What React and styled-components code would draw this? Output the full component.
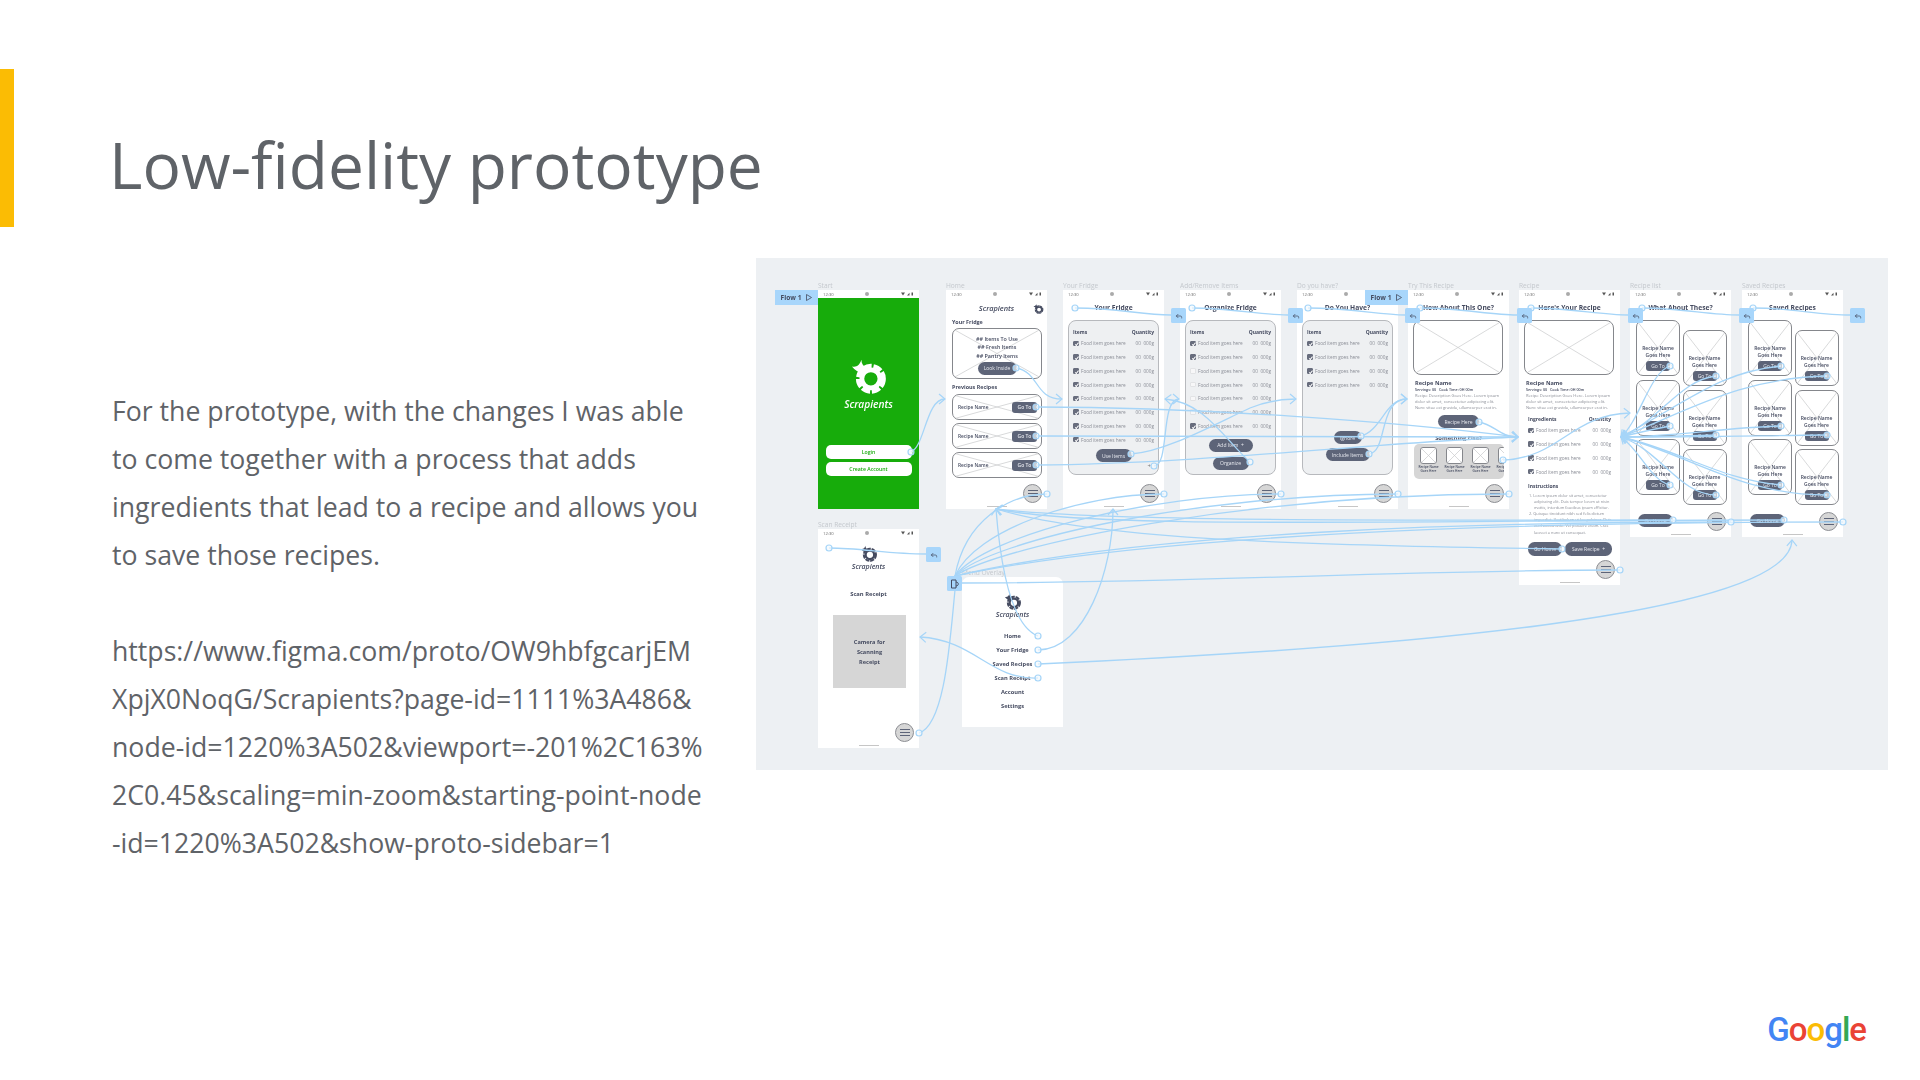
import React from "react";
import styled, { createGlobalStyle } from "styled-components";
import { Reply } from "lucide-react";

const GlobalStyle = createGlobalStyle`
  html, body { margin: 0; padding: 0; background: #fff; }
  body { font-family: "Open Sans", "Noto Sans", sans-serif; }
`;

const Slide = styled.main`
  width: 1920px;
  height: 1080px;
  display: flex;
  flex-direction: column;
  overflow: hidden;
`;
const Header = styled.header`
  flex: none;
  display: flex;
  align-items: center;
  gap: 95px;
  margin-top: 69px;
  height: 158px;
`;
const Accent = styled.div`
  width: 14px;
  height: 100%;
  background: #fbbc04;
`;
const Title = styled.h1`
  margin: 0;
  padding-top: 34px;
  font-size: 64px;
  line-height: 88px;
  font-weight: 400;
  color: #5f6368;
`;
const Main = styled.section`
  flex: none;
  display: flex;
  margin-top: 31px;
`;
const Copy = styled.div`
  width: 756px;
  padding: 128.5px 0 0 112px;
  box-sizing: border-box;
  color: #5f6368;
  font-size: 26.67px;
  line-height: 48.1px;
  white-space: nowrap;
`;
const CopyGap = styled.div`
  height: 48.1px;
`;
const Canvas = styled.div`
  position: relative;
  flex: none;
  width: 1132px;
  height: 512px;
  background: #edf0f3;
  overflow: hidden;
  filter: blur(0.35px);
`;
const Footer = styled.footer`
  flex: none;
  display: flex;
  justify-content: flex-end;
  padding: 142px 54px 0 0;
`;
const Wordmark = styled.div`
  display: flex;
  font-family: "Roboto", "Open Sans", sans-serif;
  font-size: 33px;
  line-height: 42px;
  font-weight: 500;
  letter-spacing: -1px;
`;
const Letter = styled.span`
  color: ${p => p.$color};
`;

/* figma frames */
const Phone = styled.article`
  position: absolute;
  left: ${p => p.$x - 756}px;
  top: ${p => p.$y - 258}px;
  width: 101px;
  height: ${p => p.$h}px;
  background: #fff;
  color: #454b60;
  border-radius: ${p => (p.$rounded ? "7px 7px 0 0" : "0")};
  display: flex;
  flex-direction: column;
`;
const FrameLabel = styled.div`
  position: absolute;
  left: 0;
  bottom: 100%;
  font-size: 6.6px;
  line-height: 9px;
  color: #c4c8cd;
  white-space: nowrap;
`;
const Status = styled.div`
  flex: none;
  height: 8px;
  padding: 0 6px 0 5px;
  display: flex;
  align-items: center;
  justify-content: space-between;
  font-size: 4.2px;
  color: #666;
  background: #fff;
`;
const Camera = styled.span`
  width: 4px;
  height: 4px;
  border-radius: 50%;
  background: #aaa;
`;
const ScreenTitle = styled.div`
  margin-top: 5px;
  height: 10px;
  font-size: 6.7px;
  line-height: 10px;
  font-weight: 700;
  text-align: center;
  white-space: nowrap;
`;
const Brand = styled.div`
  font-style: italic;
  font-weight: 600;
  text-align: center;
  font-size: ${p => p.$size || 7}px;
  line-height: ${p => p.$lh || 8}px;
  margin-top: ${p => p.$top || 0}px;
  color: ${p => p.$color || "#454b60"};
`;
const LogoWrap = styled.div`
  display: flex;
  justify-content: center;
  margin-top: ${p => p.$top || 0}px;
`;
const HomeBar = styled.div`
  position: absolute;
  left: 50%;
  bottom: 2px;
  width: 20px;
  height: 1px;
  margin-left: -10px;
  background: ${p => p.$color || "#c6c6c6"};
`;
const MenuFab = styled.div`
  position: absolute;
  right: 5px;
  bottom: 6px;
  width: 19px;
  height: 19px;
  border-radius: 50%;
  background: #d6d6d6;
  border: 1px solid #8d8f94;
  box-sizing: border-box;
  display: flex;
  flex-direction: column;
  align-items: center;
  justify-content: center;
  gap: 2px;
`;
const MenuBar = styled.span`
  width: 10px;
  height: 1px;
  background: #5d6478;
`;
const Pill = styled.div`
  flex: none;
  width: ${p => p.$w}px;
  height: ${p => p.$h || 13}px;
  margin-top: ${p => p.$top || 0}px;
  border-radius: ${p => (p.$h && p.$h < 12 ? 3 : 6.5)}px;
  background: #5d6478;
  color: #e8eaf0;
  font-size: 5px;
  display: flex;
  align-items: center;
  justify-content: center;
  gap: 4px;
  white-space: nowrap;
  position: relative;
`;

/* start screen */
const GreenFill = styled.div`
  flex: 1;
  background: #17ac0b;
  padding-top: 58px;
  display: flex;
  flex-direction: column;
  align-items: center;
`;
const WhiteButton = styled.div`
  width: 86px;
  height: 13.5px;
  margin-top: ${p => p.$top}px;
  background: #fff;
  border-radius: 5px;
  color: #17ac0b;
  font-size: 5.2px;
  font-weight: 600;
  display: flex;
  align-items: center;
  justify-content: center;
`;

/* home screen */
const BrandRow = styled.div`
  position: relative;
  margin-top: 5px;
  height: 10px;
  display: flex;
  justify-content: center;
  align-items: center;
`;
const CornerIcon = styled.div`
  position: absolute;
  right: 3px;
  top: 0;
  display: flex;
`;
const SectionHead = styled.div`
  margin: ${p => p.$top}px 0 0 6px;
  font-size: 5.4px;
  line-height: 8px;
  font-weight: 700;
`;
const WireBox = styled.div`
  position: relative;
  flex: none;
  box-sizing: border-box;
  width: ${p => p.$w}px;
  height: ${p => p.$h}px;
  margin-top: ${p => p.$top || 0}px;
  margin-left: ${p => p.$left || 0}px;
  border: 1px solid #85878c;
  border-radius: ${p => p.$radius || 7}px;
  background: #fff;
  display: flex;
  overflow: hidden;
`;
const WireLines = styled.svg`
  position: absolute;
  inset: 0;
  width: 100%;
  height: 100%;
`;
const BoxStack = styled.div`
  position: relative;
  flex: 1;
  display: flex;
  flex-direction: column;
  align-items: center;
  padding-top: ${p => p.$pad || 0}px;
  justify-content: ${p => (p.$end ? "flex-end" : "flex-start")};
  padding-bottom: ${p => (p.$end ? 4 : 0)}px;
`;
const TinyLine = styled.div`
  font-size: ${p => p.$size || 5.4}px;
  line-height: ${p => p.$lh || 8.5}px;
  font-weight: 600;
  text-align: center;
  white-space: nowrap;
`;
const RecipeRows = styled.div`
  display: flex;
  flex-direction: column;
  gap: 3px;
  margin: 3px 0 0 6px;
`;
const RowInner = styled.div`
  position: relative;
  flex: 1;
  display: flex;
  align-items: center;
  justify-content: space-between;
  padding: 0 4px 0 5px;
  font-size: 4.8px;
  font-weight: 600;
`;

/* list card */
const ListCard = styled.div`
  box-sizing: border-box;
  height: ${p => p.$h}px;
  margin: 7px 5px 0;
  padding: 6px 4px 0;
  background: #eef0f2;
  border: 1px solid #b7b9bd;
  border-radius: 8px;
  display: flex;
  flex-direction: column;
  align-items: center;
`;
const HeadRow = styled.div`
  align-self: stretch;
  height: ${p => p.$h || 9.6}px;
  margin-top: ${p => p.$top || 0}px;
  padding: ${p => p.$pad || 0};
  display: flex;
  justify-content: space-between;
  align-items: center;
  font-size: 5px;
  font-weight: 700;
`;
const FoodLine = styled.div`
  align-self: stretch;
  flex: none;
  height: 13.75px;
  padding: ${p => p.$pad || 0};
  display: flex;
  align-items: center;
  font-size: 4.7px;
  color: #8a8d96;
  white-space: nowrap;
`;
const Check = styled.span`
  position: relative;
  width: 5.5px;
  height: 5.5px;
  border-radius: 1px;
  margin-right: 2.5px;
  flex: none;
  box-sizing: border-box;
  background: ${p => (p.$on ? "#686d7d" : "#f7f7f8")};
  border: 0.5px solid ${p => (p.$on ? "#686d7d" : "#e2e3e5")};
  &::after {
    content: "";
    display: ${p => (p.$on ? "block" : "none")};
    position: absolute;
    left: 1.6px;
    top: 0.4px;
    width: 1.2px;
    height: 2.6px;
    border: solid #fff;
    border-width: 0 0.6px 0.6px 0;
    transform: rotate(40deg);
  }
`;
const Amount = styled.span`
  margin-left: auto;
`;
const PlusMark = styled.div`
  align-self: flex-end;
  margin: 1px 3px 0 0;
  font-size: 6px;
  line-height: 6px;
  color: #777;
`;

/* recipe screens */
const RecipeName = styled.div`
  margin: 3px 0 0 7px;
  font-size: 5.6px;
  line-height: 10px;
  font-weight: 700;
`;
const Meta = styled.div`
  margin-left: 7px;
  font-size: 3.7px;
  line-height: 4.5px;
  font-weight: 600;
  white-space: nowrap;
`;
const Description = styled.div`
  margin: 0.5px 0 0 7px;
  font-size: 4.1px;
  line-height: 6px;
  color: #8a8d96;
  white-space: nowrap;
`;
const Centered = styled.div`
  display: flex;
  justify-content: center;
  gap: ${p => p.$gap || 0}px;
  margin-top: ${p => p.$top || 0}px;
`;
const SomethingElse = styled.div`
  margin-top: 5px;
  font-size: 5.8px;
  line-height: 10px;
  font-weight: 700;
  text-align: center;
`;
const Strip = styled.div`
  flex: none;
  height: 32px;
  margin: 1px 5px 0 6px;
  padding: 3px 0 0 6px;
  background: #d6d6d6;
  border-radius: 5px;
  display: flex;
  gap: 9px;
  overflow: hidden;
`;
const MiniCard = styled.div`
  flex: none;
  display: flex;
  flex-direction: column;
  align-items: center;
  width: 17px;
`;
const MiniCaption = styled.div`
  font-size: 3.2px;
  line-height: 4px;
  font-weight: 600;
  text-align: center;
  white-space: nowrap;
  margin-top: 1px;
`;
const SmallHead = styled.div`
  margin: 3.5px 0 0 9px;
  font-size: 5px;
  line-height: 9px;
  font-weight: 700;
`;
const Steps = styled.div`
  margin: 1.5px 0 0 10px;
  font-size: 3.9px;
  line-height: 6.17px;
  color: #8a8d96;
  white-space: nowrap;
`;
const StepLine = styled.div`
  padding-left: ${p => (p.$first ? 0 : 5)}px;
`;
const ButtonRow = styled.div`
  display: flex;
  gap: 3px;
  margin: 6px 0 0 9px;
`;

/* list screens */
const CardColumns = styled.div`
  display: flex;
  gap: 2.5px;
  margin: 7px 0 0 6px;
`;
const CardColumn = styled.div`
  display: flex;
  flex-direction: column;
  gap: 3.5px;
  margin-top: ${p => p.$offset}px;
`;
const GoHome = styled.div`
  margin: ${p => p.$top}px 0 0 8px;
`;

/* scan + menu screens */
const CenterLabel = styled.div`
  margin-top: ${p => p.$top}px;
  text-align: center;
  font-size: 5.8px;
  line-height: 8px;
  font-weight: 700;
`;
const CameraBox = styled.div`
  flex: none;
  width: 73px;
  height: 73px;
  margin: 17px 0 0 15px;
  padding-top: 22px;
  box-sizing: border-box;
  background: #d6d6d6;
  font-size: 5.6px;
  line-height: 10px;
  font-weight: 700;
  text-align: center;
`;
const MenuList = styled.div`
  margin-top: 10px;
  font-size: 5.7px;
  line-height: 14px;
  font-weight: 700;
  text-align: center;
`;

/* prototype overlay */
const FlowTag = styled.div`
  position: absolute;
  left: ${p => p.$x - 756}px;
  top: 32px;
  width: 43px;
  height: 14.5px;
  background: #a8d6fb;
  color: #454b60;
  font-size: 6.6px;
  font-weight: 700;
  display: flex;
  align-items: center;
  justify-content: center;
  gap: 5px;
  z-index: 3;
`;
const LinkTag = styled.div`
  position: absolute;
  left: ${p => p.$x - 756}px;
  top: ${p => p.$y - 258}px;
  width: 15px;
  height: 15px;
  background: #a8d6fb;
  border-radius: 1.5px;
  color: #454b60;
  display: flex;
  align-items: center;
  justify-content: center;
  z-index: 3;
`;
const Links = styled.svg`
  position: absolute;
  inset: 0;
  width: 100%;
  height: 100%;
  pointer-events: none;
  z-index: 2;
`;

const Cross = () => (
  <WireLines viewBox="0 0 100 100" preserveAspectRatio="none">
    <path d="M0 0 L100 100 M100 0 L0 100" stroke="#c9cacc" strokeWidth="0.7" vectorEffect="non-scaling-stroke" fill="none" />
  </WireLines>
);

const Logo = ({ size, color }) => (
  <svg width={size} height={size} viewBox="0 0 40 40">
    <circle cx="22" cy="24" r="9.5" fill="none" stroke={color} strokeWidth="5" />
    <circle cx="22" cy="24" r="13.5" fill="none" stroke={color} strokeWidth="4.5" strokeDasharray="9 2" />
    <path d="M2 11 C7 12 10 10 12 4 C12 8 14 11 18 13 L14 19 C9 17 5 15 2 11 Z" fill={color} />
  </svg>
);

const StatusBar = () => (
  <Status>
    <span>12:30</span>
    <Camera />
    <svg width="12" height="4" viewBox="0 0 12 4">
      <path d="M0 .5 H4 L2 3.5 Z M6 3.5 L8.5 .8 V3.5 Z M10.5 .5 H12 V3.5 H10.5 Z" fill="#555" />
    </svg>
  </Status>
);

const Menu = () => (
  <MenuFab>
    <MenuBar />
    <MenuBar />
    <MenuBar />
  </MenuFab>
);

const FoodRows = ({ checks, pad }) =>
  checks.map((on, i) => (
    <FoodLine key={i} $pad={pad}>
      <Check $on={on} />
      Food item goes here
      <Amount>00&nbsp;&nbsp;000g</Amount>
    </FoodLine>
  ));

const RecipeIntro = () => (
  <>
    <WireBox $w={90} $h={55} $top={7} $left={5} $radius={8}>
      <Cross />
    </WireBox>
    <RecipeName>Recipe Name</RecipeName>
    <Meta>Servings: 00 &nbsp; Cook Time: 0H 00m</Meta>
    <Description>
      Recipe Description Goes Here. Lorem ipsum
      <br />
      dolor sit amet, consectetur adipiscing elit.
      <br />
      Nunc vitae est gravida, ullamcorper erat in.
    </Description>
  </>
);

const RecipeCard = () => (
  <WireBox $w={44} $h={56}>
    <Cross />
    <BoxStack $end>
      <TinyLine $lh={7} $size={5}>Recipe Name</TinyLine>
      <TinyLine $lh={7} $size={5}>Goes Here</TinyLine>
      <Pill $w={24} $h={10} $top={2}>Go To</Pill>
    </BoxStack>
  </WireBox>
);

const RecipeListBody = ({ title }) => (
  <>
    <StatusBar />
    <ScreenTitle>{title}</ScreenTitle>
    <CardColumns>
      <CardColumn $offset={0}>
        <RecipeCard />
        <RecipeCard />
        <RecipeCard />
      </CardColumn>
      <CardColumn $offset={10}>
        <RecipeCard />
        <RecipeCard />
        <RecipeCard />
      </CardColumn>
    </CardColumns>
    <GoHome $top={9}>
      <Pill $w={35}>Go Home</Pill>
    </GoHome>
    <Menu />
    <HomeBar />
  </>
);

const arrows = [
  "M911 452 C925 446 926 399 945 399",
  "M1016 368 C1040 372 1034 399 1062 399",
  "M1036 407 C1200 407 1400 422 1518 437",
  "M1036 436 L1518 437",
  "M1036 465 C1200 464 1380 442 1518 437",
  "M1154 466 C1170 466 1160 399 1179 399",
  "M1250 462 C1225 440 1205 402 1165 399",
  "M1131 454 C1165 452 1215 424 1250 408 C1265 402 1280 399 1296 399",
  "M1361 436 C1382 430 1385 399 1407 399",
  "M1369 454 C1388 452 1378 399 1407 399",
  "M1479 422 C1495 425 1500 437 1518 437",
  "M1503 460 C1560 458 1570 415 1630 413",
  "M1670 366 C1650 372 1640 420 1621 437",
  "M1670 426 C1660 428 1640 432 1621 437",
  "M1670 485 C1650 480 1640 450 1621 437",
  "M1716 376 C1680 380 1660 420 1621 437",
  "M1716 435 C1680 436 1650 437 1621 437",
  "M1716 495 C1680 495 1660 450 1621 437",
  "M1781 366 C1720 372 1690 400 1621 437",
  "M1781 426 C1720 428 1680 436 1621 437",
  "M1781 485 C1720 480 1680 450 1621 437",
  "M1827 376 C1740 378 1690 410 1621 437",
  "M1827 435 C1740 436 1690 437 1621 437",
  "M1827 495 C1740 495 1690 455 1621 437",
  "M1038 636 C1010 625 1000 560 996 509",
  "M1562 549 C1300 545 1100 540 996 509",
  "M1673 520 C1400 520 1100 522 996 509",
  "M1784 520 C1400 520 1100 530 996 509",
  "M1038 650 C1085 650 1113 570 1113 509",
  "M1038 664 C1350 650 1790 620 1792 540",
  "M1038 678 C990 680 975 640 920 637",
];

const plainLinks = [
  "M1075 308 C1120 308 1140 315 1171 315",
  "M1192 308 C1230 308 1260 315 1288 315",
  "M1308 308 C1350 308 1380 315 1405 315",
  "M1420 308 C1460 308 1490 315 1517 315",
  "M1531 308 C1570 308 1600 315 1628 315",
  "M1642 308 C1680 308 1710 315 1739 315",
  "M1753 308 C1790 308 1820 315 1850 315",
  "M829 548 C860 548 890 554 926 554",
  "M1047 494 C1010 494 965 520 955 576",
  "M1164 494 C1080 494 975 530 955 576",
  "M1281 494 C1150 494 985 535 955 576",
  "M1398 494 C1200 494 990 540 955 576",
  "M1509 494 C1250 494 1000 545 955 576",
  "M1731 522 C1500 522 1150 530 955 576",
  "M1843 522 C1500 522 1150 535 955 576",
  "M962 583 C1200 583 1400 570 1620 570",
  "M919 733 C945 725 950 640 955 590",
];

const dots = [
  [911, 452], [1016, 368], [1036, 407], [1036, 436], [1036, 465], [1047, 494],
  [1075, 308], [1131, 454], [1154, 466], [1164, 494], [1192, 308], [1250, 462],
  [1281, 494], [1308, 308], [1361, 436], [1369, 454], [1398, 494], [1420, 308],
  [1479, 422], [1503, 460], [1509, 494], [1531, 308], [1562, 549], [1620, 570],
  [1642, 308], [1670, 366], [1670, 426], [1670, 485], [1716, 376], [1716, 435],
  [1716, 495], [1673, 520], [1731, 522], [1753, 308], [1781, 366], [1781, 426],
  [1781, 485], [1827, 376], [1827, 435], [1827, 495], [1784, 520], [1843, 522],
  [829, 548], [919, 733], [1038, 636], [1038, 650], [1038, 664], [1038, 678],
];

const backTags = [
  [1171, 308], [1288, 308], [1405, 308], [1517, 308], [1628, 308], [1739, 308], [1850, 308], [926, 547],
];

const Flow = ({ x }) => (
  <FlowTag $x={x}>
    Flow 1
    <svg width="6" height="7" viewBox="0 0 6 7">
      <path d="M.5 .5 L5.5 3.5 L.5 6.5 Z" fill="none" stroke="#454b60" strokeWidth="0.8" />
    </svg>
  </FlowTag>
);

const copyLines = [
  "For the prototype, with the changes I was able",
  "to come together with a process that adds",
  "ingredients that lead to a recipe and allows you",
  "to save those recipes.",
];
const urlLines = [
  "https://www.figma.com/proto/OW9hbfgcarjEM",
  "XpjX0NoqG/Scrapients?page-id=1111%3A486&",
  "node-id=1220%3A502&viewport=-201%2C163%",
  "2C0.45&scaling=min-zoom&starting-point-node",
  "-id=1220%3A502&show-proto-sidebar=1",
];
const stepLines = [
  "1. Lorem ipsum dolor sit amet, consectetur",
  "adipiscing elit. Duis tempor lorem ut nisin",
  "mattis, interdum faucibus ipsum efficitur.",
  "2. Quisque tincidunt nibh sed felis dictum",
  "imperdiet. Vestibulum ut leo pulvinar. Duis",
  "eu rhoncus ante. Vel posuere etiam. Cras",
  "laoreet a nunc ut consequat.",
];
const logoLetters = [
  ["G", "#4285f4"], ["o", "#ea4335"], ["o", "#fbbc05"], ["g", "#4285f4"], ["l", "#34a853"], ["e", "#ea4335"],
];

export default function App() {
  return (
    <Slide>
      <GlobalStyle />
      <Header>
        <Accent />
        <Title>Low-fidelity prototype</Title>
      </Header>
      <Main>
        <Copy>
          {copyLines.map(l => <div key={l}>{l}</div>)}
          <CopyGap />
          {urlLines.map(l => <div key={l}>{l}</div>)}
        </Copy>
        <Canvas>
          <Phone $x={818} $y={290} $h={219}>
            <FrameLabel>Start</FrameLabel>
            <StatusBar />
            <GreenFill>
              <Logo size={38} color="#fff" />
              <Brand $size={10.2} $lh={12} $top={4} $color="#fff">Scrapients</Brand>
              <WhiteButton $top={35}>Login</WhiteButton>
              <WhiteButton $top={3.5}>Create Account</WhiteButton>
            </GreenFill>
          </Phone>

          <Phone $x={946} $y={290} $h={219}>
            <FrameLabel>Home</FrameLabel>
            <StatusBar />
            <BrandRow>
              <Brand $size={7.4}>Scrapients</Brand>
              <CornerIcon><Logo size={11} color="#454b60" /></CornerIcon>
            </BrandRow>
            <SectionHead $top={5}>Your Fridge</SectionHead>
            <WireBox $w={90} $h={51} $top={2} $left={6}>
              <Cross />
              <BoxStack $pad={5.5}>
                <TinyLine>## Items To Use</TinyLine>
                <TinyLine>## Fresh Items</TinyLine>
                <TinyLine>## Pantry Items</TinyLine>
                <Pill $w={39} $top={1.75}>Look Inside</Pill>
              </BoxStack>
            </WireBox>
            <SectionHead $top={4}>Previous Recipes</SectionHead>
            <RecipeRows>
              {[0, 1, 2].map(i => (
                <WireBox key={i} $w={90} $h={26}>
                  <Cross />
                  <RowInner>
                    Recipe Name
                    <Pill $w={25} $h={11}>Go To</Pill>
                  </RowInner>
                </WireBox>
              ))}
            </RecipeRows>
            <Menu />
            <HomeBar />
          </Phone>

          <Phone $x={1063} $y={290} $h={219}>
            <FrameLabel>Your Fridge</FrameLabel>
            <StatusBar />
            <ScreenTitle>Your Fridge</ScreenTitle>
            <ListCard $h={155}>
              <HeadRow><span>Items</span><span>Quantity</span></HeadRow>
              <FoodRows checks={[1, 1, 1, 1, 1, 1, 1, 1]} />
              <Pill $w={36} $top={2.5}>Use Items</Pill>
              <PlusMark>+</PlusMark>
            </ListCard>
            <Menu />
            <HomeBar />
          </Phone>

          <Phone $x={1180} $y={290} $h={219}>
            <FrameLabel>Add/Remove Items</FrameLabel>
            <StatusBar />
            <ScreenTitle>Organize Fridge</ScreenTitle>
            <ListCard $h={155}>
              <HeadRow><span>Items</span><span>Quantity</span></HeadRow>
              <FoodRows checks={[1, 1, 0, 0, 0, 0, 1]} />
              <Pill $w={44} $top={6}>Add Item &nbsp;+</Pill>
              <Pill $w={36} $top={5}>Organize</Pill>
            </ListCard>
            <Menu />
            <HomeBar />
          </Phone>

          <Phone $x={1297} $y={290} $h={219}>
            <FrameLabel>Do you have?</FrameLabel>
            <StatusBar />
            <ScreenTitle>Do You Have?</ScreenTitle>
            <ListCard $h={155}>
              <HeadRow><span>Items</span><span>Quantity</span></HeadRow>
              <FoodRows checks={[1, 1, 1, 1]} />
              <Pill $w={28} $top={39.5}>Ignore</Pill>
              <Pill $w={44} $top={4}>Include Items</Pill>
            </ListCard>
            <Menu />
            <HomeBar />
          </Phone>

          <Phone $x={1408} $y={290} $h={219}>
            <FrameLabel>Try This Recipe</FrameLabel>
            <StatusBar />
            <ScreenTitle>How About This One?</ScreenTitle>
            <RecipeIntro />
            <Centered $top={4}><Pill $w={41}>Recipe Here</Pill></Centered>
            <SomethingElse>Something Else?</SomethingElse>
            <Strip>
              {[0, 1, 2, 3].map(i => (
                <MiniCard key={i}>
                  <WireBox $w={17} $h={17} $radius={3}><Cross /></WireBox>
                  <MiniCaption>Recipe Name<br />Goes Here</MiniCaption>
                </MiniCard>
              ))}
            </Strip>
            <Menu />
            <HomeBar />
          </Phone>

          <Phone $x={1519} $y={290} $h={295}>
            <FrameLabel>Recipe</FrameLabel>
            <StatusBar />
            <ScreenTitle>Here's Your Recipe</ScreenTitle>
            <RecipeIntro />
            <HeadRow $h={9} $top={3.5} $pad="0 9px">
              <span>Ingredients</span><span>Quantity</span>
            </HeadRow>
            <FoodRows checks={[1, 1, 1, 1]} pad="0 9px" />
            <SmallHead>Instructions</SmallHead>
            <Steps>
              {stepLines.map(l => (
                <StepLine key={l} $first={/^\d/.test(l)}>{l}</StepLine>
              ))}
            </Steps>
            <ButtonRow>
              <Pill $w={34} $h={14}>Go Home</Pill>
              <Pill $w={47} $h={14}>Save Recipe &nbsp;+</Pill>
            </ButtonRow>
            <Menu />
            <HomeBar />
          </Phone>

          <Phone $x={1630} $y={290} $h={247}>
            <FrameLabel>Recipe list</FrameLabel>
            <RecipeListBody title="What About These?" />
          </Phone>

          <Phone $x={1742} $y={290} $h={247}>
            <FrameLabel>Saved Recipes</FrameLabel>
            <RecipeListBody title="Saved Recipes" />
          </Phone>

          <Phone $x={818} $y={529} $h={219}>
            <FrameLabel>Scan Receipt</FrameLabel>
            <StatusBar />
            <LogoWrap $top={7}><Logo size={18} color="#454b60" /></LogoWrap>
            <Brand $top={1}>Scrapients</Brand>
            <CenterLabel $top={19}>Scan Receipt</CenterLabel>
            <CameraBox>
              Camera for<br />Scanning<br />Receipt
            </CameraBox>
            <Menu />
            <HomeBar />
          </Phone>

          <Phone $x={962} $y={577} $h={150} $rounded>
            <FrameLabel>Menu Overlay</FrameLabel>
            <LogoWrap $top={15}><Logo size={18} color="#454b60" /></LogoWrap>
            <Brand $top={1}>Scrapients</Brand>
            <MenuList>
              <div>Home</div>
              <div>Your Fridge</div>
              <div>Saved Recipes</div>
              <div>Scan Receipt</div>
              <div>Account</div>
              <div>Settings</div>
            </MenuList>
          </Phone>

          <Links viewBox="756 258 1132 512">
            <defs>
              <marker id="tip" markerUnits="userSpaceOnUse" markerWidth="12" markerHeight="12" refX="7" refY="6" orient="auto">
                <path d="M1 1 L7 6 L1 11" fill="none" stroke="#a6d5f8" strokeWidth="1.2" />
              </marker>
            </defs>
            {plainLinks.map(d => (
              <path key={d} d={d} fill="none" stroke="#a6d5f8" strokeWidth="1.3" />
            ))}
            {arrows.map(d => (
              <path key={d} d={d} fill="none" stroke="#a6d5f8" strokeWidth="1.3" markerEnd="url(#tip)" />
            ))}
            {dots.map(([cx, cy]) => (
              <circle key={`${cx}-${cy}`} cx={cx} cy={cy} r="3" fill="#f4f9fd" fillOpacity="0.7" stroke="#a6d5f8" strokeWidth="1.2" />
            ))}
          </Links>

          <Flow x={775} />
          <Flow x={1365} />
          {backTags.map(([x, y]) => (
            <LinkTag key={x} $x={x} $y={y}>
              <Reply size={8} strokeWidth={2.2} />
            </LinkTag>
          ))}
          <LinkTag $x={947} $y={576}>
            <svg width="10" height="10" viewBox="0 0 10 10">
              <path d="M1.5 1 H6 V9 H1.5 Z M6 3 C9 3 9 7 6 7" fill="none" stroke="#454b60" strokeWidth="1" />
            </svg>
          </LinkTag>
        </Canvas>
      </Main>
      <Footer>
        <Wordmark>
          {logoLetters.map(([c, color], i) => (
            <Letter key={i} $color={color}>{c}</Letter>
          ))}
        </Wordmark>
      </Footer>
    </Slide>
  );
}
